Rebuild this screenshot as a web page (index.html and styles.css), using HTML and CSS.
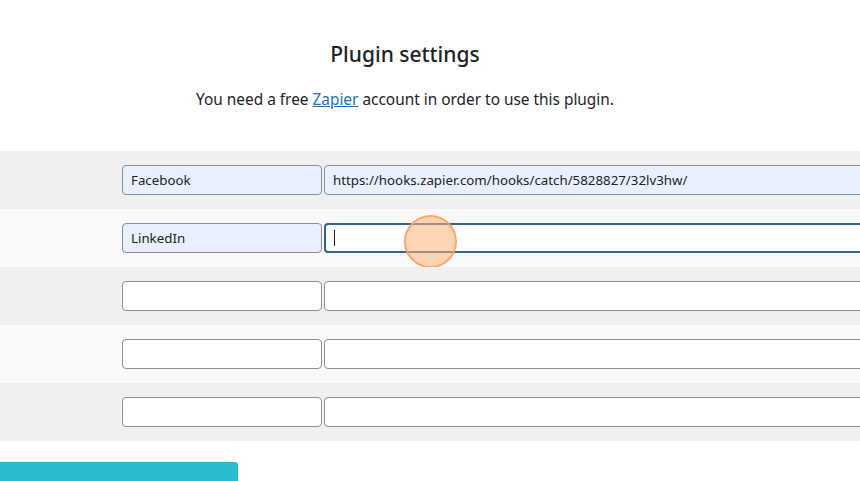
FILE: index.html
```
<!DOCTYPE html>
<html lang="en">

<head>
    <meta charset="UTF-8">
    <meta name="viewport" content="width=device-width, initial-scale=1.0">
    <title>Plugin settings</title>
    <link rel="stylesheet" href="styles.css">
</head>

<body>
    <div class="page">
        <header class="intro">
            <h2>Plugin settings</h2>
            <p>You need a free <a href="#">Zapier</a> account in order to use this plugin.</p>
        </header>

        <div class="hooks">
            <div class="row">
                <input class="name filled" type="text" value="Facebook">
                <input class="url filled" type="text" value="https://hooks.zapier.com/hooks/catch/5828827/32lv3hw/">
            </div>
            <div class="row">
                <input class="name filled" type="text" value="LinkedIn">
                <div class="url focused"><span class="caret"></span></div>
                <span class="click"></span>
            </div>
            <div class="row">
                <input class="name" type="text">
                <input class="url" type="text">
            </div>
            <div class="row">
                <input class="name" type="text">
                <input class="url" type="text">
            </div>
            <div class="row">
                <input class="name" type="text">
                <input class="url" type="text">
            </div>
        </div>

        <button class="save" type="button"></button>
    </div>
</body>

</html>
```

FILE: styles.css
```
* {
    margin: 0;
    padding: 0;
    box-sizing: border-box;
}

body {
    font-family: "Noto Sans", "Open Sans", sans-serif;
    color: #1d2327;
    background: #FFFFFF;
    overflow: hidden;
}

.intro {
    width: 810px;
    text-align: center;
    padding-top: 38px;
}

.intro h2 {
    font-size: 21px;
    font-weight: 500;
    line-height: 32px;
}

.intro p {
    margin-top: 19px;
    font-size: 15.4px;
    line-height: 22px;
}

.intro a {
    color: #2271b1;
}

.hooks {
    margin-top: 40px;
}

.row {
    position: relative;
    display: flex;
    gap: 2px;
    height: 58px;
    padding: 14px 0 14px 122px;
    overflow: hidden;
    background: #f0f0f0;
}

.row:nth-child(even) {
    background: #f9f9f9;
}

.row input,
.row .url {
    flex-shrink: 0;
    height: 30px;
    padding: 0 8px;
    font-family: inherit;
    font-size: 13.3px;
    color: #1d2327;
    background: #FFFFFF;
    border: 1px solid #8c8f94;
    border-radius: 4px;
    outline: none;
}

.name {
    width: 200px;
}

.url {
    width: 700px;
}

.row .filled {
    background: #e8f0fe;
}

.row .focused {
    display: flex;
    align-items: center;
    border: 2px solid #2f6890;
    padding-left: 8px;
}

.caret {
    width: 1px;
    height: 16px;
    background: #1d2327;
}

.click {
    position: absolute;
    left: 404px;
    top: 6px;
    width: 53px;
    height: 53px;
    border-radius: 50%;
    background: rgba(253, 178, 120, 0.55);
    border: 2px solid rgba(250, 160, 90, 0.85);
}

.save {
    display: block;
    width: 238px;
    height: 40px;
    margin-top: 21px;
    border: none;
    border-radius: 0 3px 0 0;
    background: #29bccf;
}
```
